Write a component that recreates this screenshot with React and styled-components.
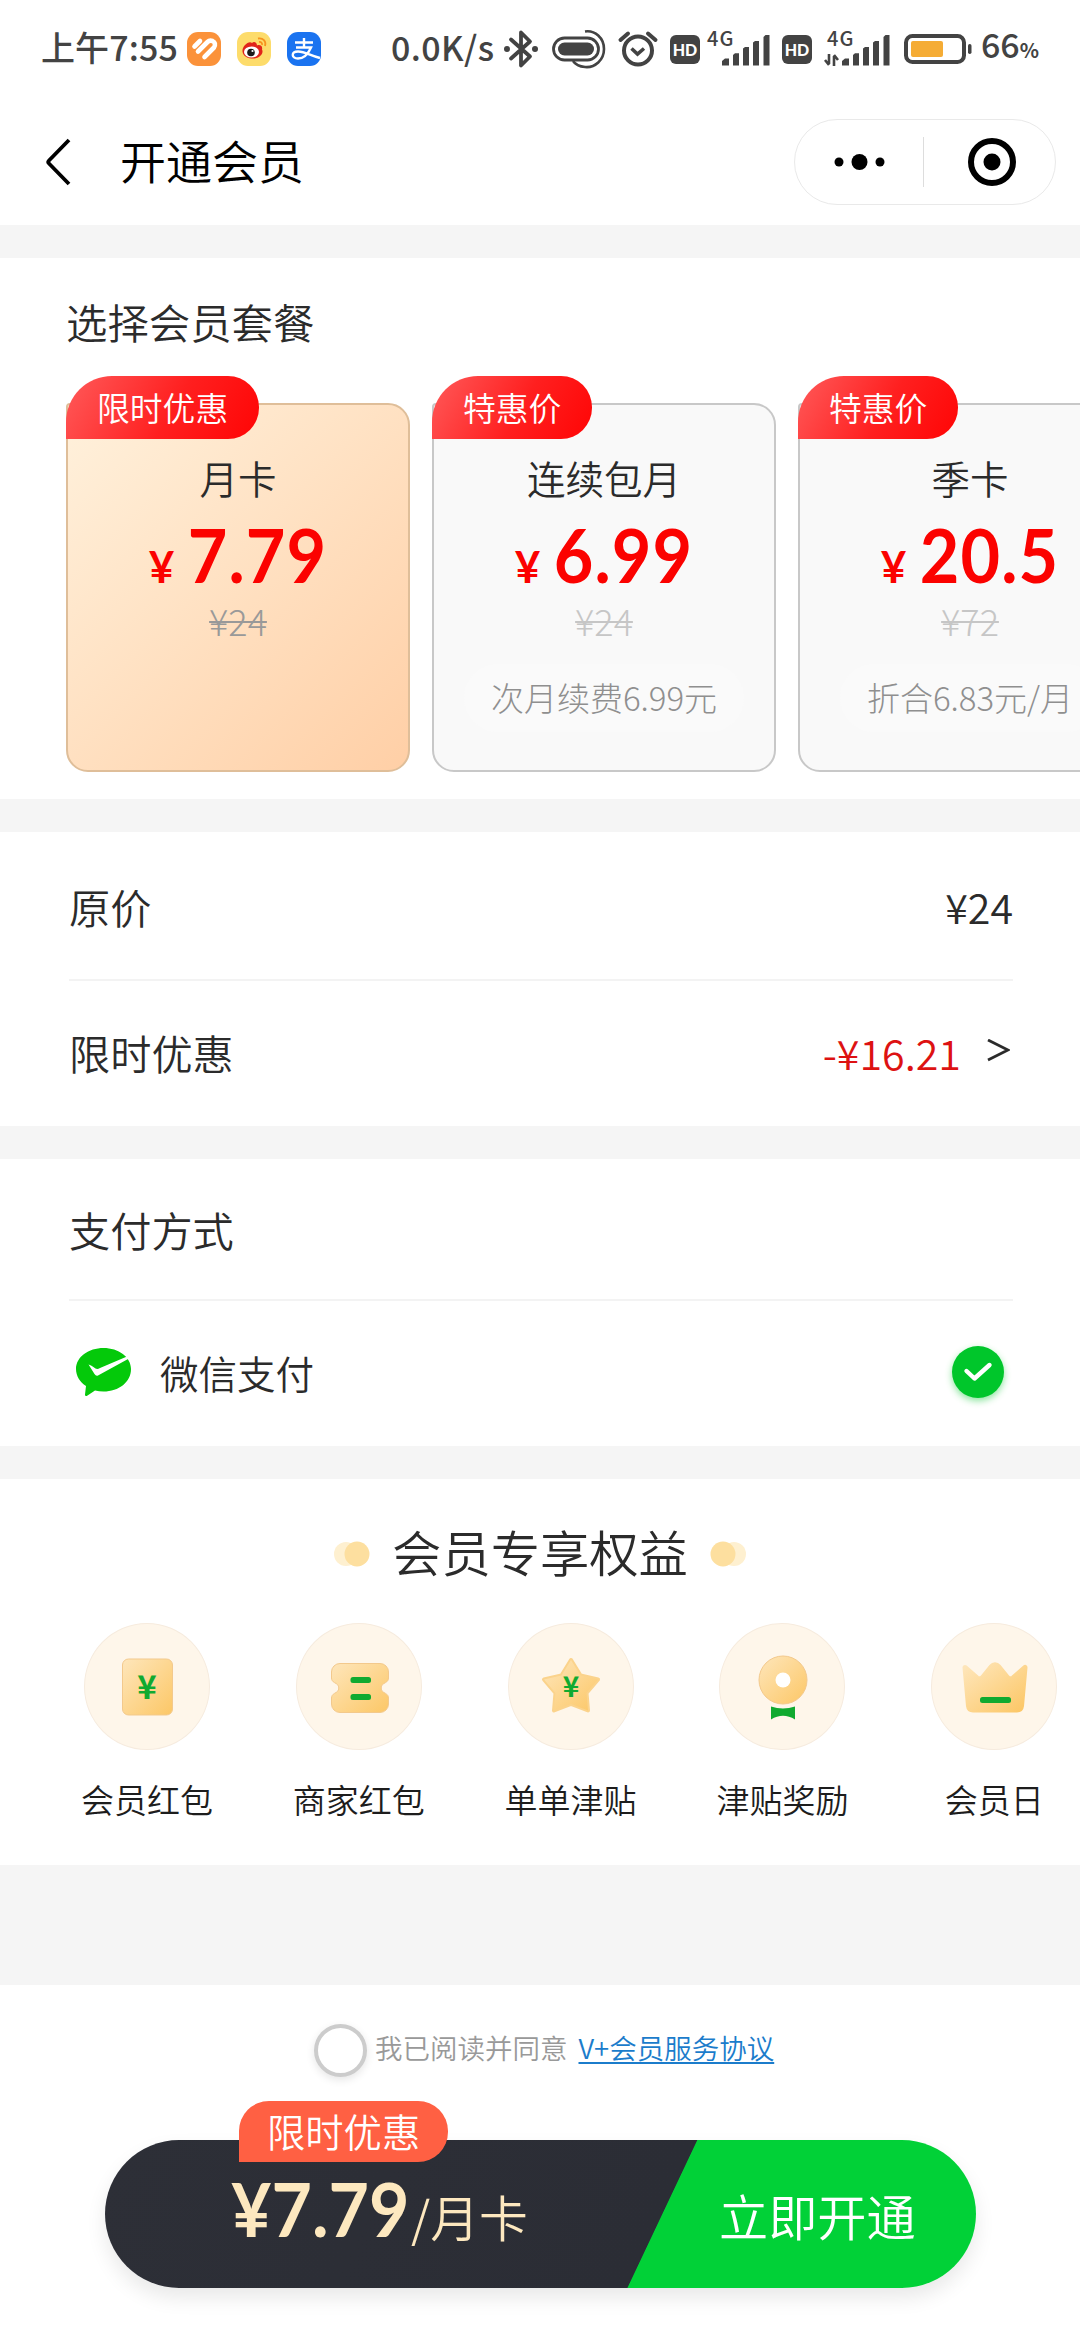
import React, { useState } from 'react';
import styled, { createGlobalStyle } from 'styled-components';

const GlobalStyle = createGlobalStyle`
  * {
    box-sizing: border-box;
  }
  body {
    margin: 0;
    background-color: #ffffff;
    font-family: 'Noto Sans CJK SC', sans-serif;
    color: #2b2b2b;
    overflow-x: hidden;
  }
  svg {
    display: block;
    flex-shrink: 0;
  }
`;

const PageWrapper = styled.div`
  width: 1080px;
  height: 2340px;
  display: flex;
  flex-direction: column;
  background-color: #f5f5f5;
  overflow: hidden;
`;

/* status bar */

const StatusBar = styled.div`
  height: 98px;
  flex-shrink: 0;
  display: flex;
  align-items: center;
  padding: 0 41px;
  background-color: #ffffff;
  color: #434343;
`;

const StatusText = styled.span`
  font-size: 34px;
  line-height: 94px;
  padding-bottom: 4px;
  font-weight: 500;
  white-space: nowrap;
  width: ${(props) => (props.$width ? `${props.$width}px` : 'auto')};
  margin-left: ${(props) => props.$gap || 0}px;
  letter-spacing: ${(props) => props.$spacing || 0}px;
`;

const AppIcons = styled.div`
  display: flex;
  gap: 16px;
  margin-left: 4px;
`;

const StatusRight = styled.div`
  display: flex;
  align-items: center;
  margin-left: auto;
`;

const StatusIcon = styled.svg`
  margin-left: ${(props) => props.$gap || 0}px;
  overflow: visible;
`;

const HdBadge = styled.div`
  width: 30px;
  height: 29px;
  margin-left: ${(props) => props.$gap}px;
  border-radius: 6px;
  background-color: #434343;
  color: #ffffff;
  font-family: Lato, sans-serif;
  font-weight: 900;
  font-size: 16px;
  line-height: 29px;
  text-align: center;
`;

const Percent = styled.span`
  font-size: 20px;
  font-weight: 700;
`;

/* nav bar */

const NavBar = styled.div`
  height: 127px;
  flex-shrink: 0;
  display: flex;
  align-items: center;
  padding: 0 24px 0 44px;
  background-color: #ffffff;
`;

const NavTitle = styled.h1`
  margin: 0 0 6px 48px;
  font-size: 46px;
  line-height: 60px;
  font-weight: 350;
  color: #000000;
`;

const Capsule = styled.div`
  width: 262px;
  height: 86px;
  margin-left: auto;
  display: flex;
  align-items: center;
  border: 1.5px solid #e9e9e9;
  border-radius: 43px;
`;

const CapsuleHalf = styled.div`
  flex: 1;
  display: flex;
  justify-content: center;
  padding-left: ${(props) => props.$pad || 0}px;
`;

const CapsuleLine = styled.div`
  width: 1px;
  height: 50px;
  background-color: #dddddd;
`;

/* sections */

const Section = styled.section`
  flex-shrink: 0;
  height: ${(props) => props.$height}px;
  margin-top: 33px;
  background-color: #ffffff;
`;

const SectionTitle = styled.h2`
  margin: 0;
  padding: 33px 0 0 66px;
  font-size: 41.4px;
  line-height: 60px;
  font-weight: 350;
`;

const PlanList = styled.div`
  display: flex;
  gap: 22px;
  padding: 52px 0 0 66px;
  overflow: hidden;
  height: 440px;
`;

const PlanCard = styled.div`
  position: relative;
  width: 344px;
  height: 369px;
  flex-shrink: 0;
  display: flex;
  flex-direction: column;
  align-items: center;
  padding-top: 44px;
  border: 2px solid ${(props) => (props.$active ? '#dfbe99' : '#c8c8c8')};
  border-radius: 4px 22px 22px 22px;
  background: ${(props) =>
    props.$active
      ? 'linear-gradient(135deg, #fff1dc 0%, #ffe2c4 45%, #ffcfa6 100%)'
      : '#f9f9f9'};
`;

const PlanBadge = styled.div`
  position: absolute;
  left: -2px;
  top: -29px;
  height: 63px;
  padding: 0 31px;
  border-radius: 46px 31px 31px 0;
  background: linear-gradient(120deg, #ff5a5a 0%, #ff1f1f 55%, #ff0505 100%);
  color: #ffffff;
  font-size: 32.8px;
  font-weight: 350;
  line-height: 62px;
  white-space: nowrap;
`;

const PlanName = styled.div`
  font-size: 38.5px;
  line-height: 56px;
  font-weight: 350;
`;

const PlanPrice = styled.div`
  display: flex;
  align-items: baseline;
  justify-content: center;
  height: 76px;
  margin-top: 11px;
  line-height: 76px;
  font-family: Lato, sans-serif;
  font-weight: 700;
  color: #fb0200;
`;

const Yen = styled.span`
  font-size: 44px;
  width: 24px;
  display: flex;
  justify-content: center;
`;

const Amount = styled.span`
  font-size: 75px;
  width: 139px;
  margin-left: 14px;
  display: flex;
  justify-content: center;
  letter-spacing: 1.2px;
  transform: scaleX(0.91);
`;

const OldPrice = styled.del`
  margin-top: 8px;
  font-size: 36px;
  line-height: 40px;
  font-weight: 300;
  color: ${(props) => (props.$active ? '#999999' : '#c6c6c6')};
  text-decoration-thickness: 2px;
`;

const PlanNote = styled.div`
  margin-top: 24px;
  height: 68px;
  padding: 0 27px;
  border-radius: 34px;
  background-color: #fafafa;
  font-size: 33px;
  font-weight: 300;
  line-height: 66px;
  color: #8f8f8f;
  white-space: nowrap;
`;

const Row = styled.div`
  height: ${(props) => props.$height}px;
  margin: 0 67px 0 69px;
  display: flex;
  align-items: center;
  font-size: 41.2px;
  font-weight: 350;
  border-bottom: ${(props) => (props.$divider ? '2px solid #f3f3f3' : 'none')};
`;

const RowValue = styled.span`
  margin-left: auto;
  color: ${(props) => props.$color || '#2b2b2b'};
`;

const RowArrow = styled.svg`
  margin: 0 3px 0 26px;
`;

const PayName = styled.span`
  margin-left: 28px;
  font-size: 38.5px;
`;

const PayCheck = styled.div`
  width: 52px;
  height: 52px;
  margin: 0 9px 0 auto;
  display: flex;
  align-items: center;
  justify-content: center;
  border-radius: 50%;
  background-color: #00c62b;
  box-shadow: 0 3px 7px rgba(0, 198, 43, 0.45);
`;

/* benefits */

const BenefitTitle = styled.h2`
  margin: 0;
  padding-top: 36px;
  display: flex;
  align-items: center;
  justify-content: center;
  gap: 22px;
  font-size: 49.3px;
  line-height: 72px;
  font-weight: 350;

  svg {
    margin-top: 6px;
  }
`;

const BenefitList = styled.div`
  display: flex;
  gap: 45.8px;
  padding: 36px 0 0 64px;
  overflow: hidden;
`;

const BenefitItem = styled.div`
  width: 166px;
  flex-shrink: 0;
  display: flex;
  flex-direction: column;
  align-items: center;
  font-size: 33px;
  line-height: 48px;
  font-weight: 350;
  color: #1d1d1d;
`;

const BenefitCircle = styled.div`
  width: 126px;
  height: 127px;
  margin-bottom: 25px;
  border: 1.5px solid #f6ebde;
  border-radius: 50%;
  background-color: #fef6ea;
  display: flex;
  align-items: center;
  justify-content: center;
`;

/* footer */

const Footer = styled.footer`
  flex: 1;
  margin-top: 120px;
  padding-top: 39px;
  background-color: #ffffff;
`;

const Agreement = styled.div`
  height: 53px;
  display: flex;
  align-items: center;
  padding-left: 314px;
  font-size: 27.5px;
  line-height: 47px;
  font-weight: 350;
  color: #999999;
`;

const AgreementText = styled.span`
  padding-bottom: 6px;
`;

const Radio = styled.button`
  width: 53px;
  height: 53px;
  padding: 0;
  margin-right: 8px;
  border: 4.5px solid #cccccc;
  border-radius: 50%;
  background-color: ${(props) => (props.$checked ? '#00c62b' : '#ffffff')};
  box-shadow: 0 3px 8px rgba(0, 0, 0, 0.1);
`;

const AgreementLink = styled.a`
  margin-left: 11px;
  color: #1b7ccb;
  text-decoration: underline;
  text-decoration-thickness: 2px;
  text-underline-offset: 3px;
`;

const SubmitBar = styled.div`
  position: relative;
  width: 871px;
  height: 148px;
  margin: 63px 0 0 105px;
  display: flex;
  border-radius: 74px;
  background: linear-gradient(115.3deg, #2d2f37 0%, #2b2d35 62.9%, #01d137 63%);
  box-shadow: 0 10px 20px rgba(0, 0, 0, 0.09);
`;

const SubmitBadge = styled.div`
  position: absolute;
  left: 134px;
  top: -39px;
  height: 61px;
  padding: 0 28px;
  border-radius: 30px 30px 30px 0;
  background-color: #ff6043;
  color: #ffffff;
  font-size: 38.3px;
  font-weight: 350;
  line-height: 60px;
  white-space: nowrap;
`;

const SubmitPrice = styled.div`
  width: 557px;
  height: 148px;
  padding-left: 126px;
  display: flex;
  align-items: baseline;
  line-height: 136px;
  color: #fde8bf;
`;

const SubmitAmount = styled.span`
  width: 180px;
  font-family: Lato, sans-serif;
  font-size: 75px;
  font-weight: 700;
  white-space: nowrap;
  transform: scaleX(0.93);
  transform-origin: left;
`;

const SubmitUnit = styled.span`
  font-size: 48.8px;
  font-weight: 350;
`;

const SubmitButton = styled.button`
  padding: 1px 0 0 57px;
  border: none;
  background: none;
  color: #ffffff;
  font-family: inherit;
  font-size: 49.2px;
  font-weight: 350;
`;

const plans = [
  { id: 'month', badge: '限时优惠', name: '月卡', price: '7.79', old: '¥24' },
  {
    id: 'auto',
    badge: '特惠价',
    name: '连续包月',
    price: '6.99',
    old: '¥24',
    note: '次月续费6.99元',
  },
  {
    id: 'season',
    badge: '特惠价',
    name: '季卡',
    price: '20.5',
    old: '¥72',
    note: '折合6.83元/月',
  },
];

const gold = 'url(#gold)';
const green = '#10aa30';

function GoldDefs() {
  return (
    <defs>
      <linearGradient id="gold" x1="0" y1="0" x2="1" y2="1">
        <stop offset="0" stopColor="#fee6bb" />
        <stop offset="1" stopColor="#fcc766" />
      </linearGradient>
    </defs>
  );
}

function IconYen({ y, size }) {
  return (
    <text
      x="63"
      y={y}
      textAnchor="middle"
      fontFamily="Noto Sans CJK SC, sans-serif"
      fontWeight="700"
      fontSize={size}
      fill={green}
    >
      ¥
    </text>
  );
}

const benefits = [
  {
    label: '会员红包',
    icon: (
      <>
        <rect x="38.5" y="35" width="50" height="56" rx="6" fill={gold} stroke="#f3c98c" />
        <IconYen y={75} size={33} />
      </>
    ),
  },
  {
    label: '商家红包',
    icon: (
      <>
        <path
          d="M44 39.5H84a8.5 8.5 0 0 1 8.5 8.5v6c0 2-1 3.5-3 4.6l-2.3 1.4c-2.6 1.8-2.6 6.2 0 8l2.3 1.4c2 1.1 3 2.6 3 4.6v6a8.5 8.5 0 0 1-8.5 8.5H44a8.5 8.5 0 0 1-8.5-8.5v-6c0-2 1-3.5 3-4.6l2.3-1.4c2.6-1.8 2.6-6.2 0-8l-2.3-1.4c-2-1.1-3-2.6-3-4.6v-6a8.5 8.5 0 0 1 8.500-8.500z"
          fill={gold}
          stroke="#f3c98c"
        />
        <rect x="54.5" y="53" width="20.5" height="6" rx="2.5" fill={green} />
        <rect x="54.5" y="70" width="20.5" height="6" rx="2.5" fill={green} />
      </>
    ),
  },
  {
    label: '单单津贴',
    icon: (
      <>
        <path
          d="M63 36L72.5 51.500L90 55.500L78.500 69L80 86.500L63 80L46 86.500L47.500 69L36 55.500L53.500 51.500Z"
          fill={gold}
          stroke="#fbd38c"
          strokeWidth="4"
          strokeLinejoin="round"
        />
        <path
          d="M63 36L72.5 51.500L90 55.500L78.500 69L80 86.500L63 80L46 86.500L47.500 69L36 55.500L53.500 51.500Z"
          fill={gold}
        />
        <IconYen y={73} size={28} />
      </>
    ),
  },
  {
    label: '津贴奖励',
    icon: (
      <>
        <circle cx="64" cy="56" r="24" fill={gold} stroke="#f3c98c" />
        <circle cx="64" cy="56" r="7.5" fill="#ffffff" />
        <path d="M52 82.500Q64 86.500 76 82.500V95.500Q64 88 52 95.500Z" fill={green} />
      </>
    ),
  },
  {
    label: '会员日',
    icon: (
      <>
        <path
          d="M34 43.5L46 54Q49 56 51.5 53.500L60 43Q64 38.500 68 43L76.500 53.500Q79 56 82 54L94 43.500L90.500 82Q90 86 86 86H42Q38 86 37.500 82Z"
          fill={gold}
          stroke={gold}
          strokeWidth="5"
          strokeLinejoin="round"
        />
        <rect x="49" y="73" width="31" height="6" rx="2.5" fill={green} />
      </>
    ),
  },
];

function SignalIcon({ gap, arrows }) {
  const shift = arrows ? 18 : 15;
  const width = arrows ? 66 : 63;
  return (
    <StatusIcon $gap={gap} width={width} height="38" viewBox={`0 0 ${width} 38`}>
      <text
        x={arrows ? 3 : 0}
        y="16"
        fontFamily="Noto Sans CJK SC, sans-serif"
        fontWeight="500"
        fontSize="20"
        letterSpacing="1"
        fill="#434343"
      >
        4G
      </text>
      {arrows && (
        <path
          d="M5 24V34M5 35L1 30M10 36V26M10 25L14 30"
          stroke="#434343"
          strokeWidth="2.6"
          fill="none"
        />
      )}
      <g fill="#434343">
        <path d={`M${shift} 35.5V31l3-2.5h4v7z`} />
        <path d={`M${shift + 11} 35.5V25l2-1.8h4v12.3z`} />
        <path d={`M${shift + 21} 35.5V18.5l2-1.5h4v18.5z`} />
        <path d={`M${shift + 31} 35.5V12.5l2-1.5h4v24.5z`} />
        <path d={`M${shift + 41.5} 35.5V7l2-2h4v30.5z`} />
      </g>
    </StatusIcon>
  );
}

function Status() {
  return (
    <StatusBar>
      <StatusText $width={142} $spacing={0.1}>上午7:55</StatusText>
      <AppIcons>
        <svg width="34" height="34" viewBox="0 0 34 34">
          <rect width="34" height="34" rx="11" fill="#fb923a" />
          <path
            d="M7.500 14.500L13 9M11 19.500L20.500 10M17.500 25L27 15.500Q29.500 11 25.500 9Q22.500 8 20.500 10"
            stroke="#ffffff"
            strokeWidth="4.6"
            strokeLinecap="round"
            fill="none"
          />
        </svg>
        <svg width="34" height="34" viewBox="0 0 34 34">
          <rect width="34" height="34" rx="11" fill="#fddc6b" />
          <path
            d="M15 11C12 8 5 14 5.500 19.500C6 25 13 27 17 26.500C23 26 27 21 25 17.500C26 13 22 12.500 20 13.500C20 10.500 17 9 15 11Z"
            fill="#e1251b"
          />
          <ellipse cx="14.5" cy="20" rx="7.5" ry="5.5" fill="#ffffff" />
          <circle cx="14" cy="20.5" r="3.8" fill="#1a1a1a" />
          <circle cx="15.5" cy="19" r="1.1" fill="#ffffff" />
          <path d="M21 6.500C26 5.500 29.500 9.500 28 14M22 10C24 9.700 25.500 11 25 13" stroke="#f7931e" strokeWidth="1.8" fill="none" />
        </svg>
        <svg width="34" height="34" viewBox="0 0 34 34">
          <rect width="34" height="34" rx="11" fill="#1a73f0" />
          <path
            d="M8 10.500H26M17 6V15.500M9 15.500H24C22 20 18 26.500 11 26.500C4 26.500 4 19.500 11 19.500C18 19.500 22 23 33 26"
            stroke="#ffffff"
            strokeWidth="2.4"
            fill="none"
          />
        </svg>
      </AppIcons>
      <StatusRight>
        <StatusText $width={107} $spacing={0.4}>0.0K/s</StatusText>
        <StatusIcon $gap={5} width="36" height="40" viewBox="0 0 36 40">
          <path
            d="M8 10.500L27 27.500L18 36.500V3.500L27 12.500L8 29.500"
            stroke="#434343"
            strokeWidth="3.8"
            strokeLinejoin="round"
            strokeLinecap="round"
            fill="none"
          />
          <circle cx="4" cy="20" r="3" fill="#434343" />
          <circle cx="32" cy="20" r="3" fill="#434343" />
        </StatusIcon>
        <StatusIcon $gap={13} width="54" height="40" viewBox="0 0 54 40">
          <path d="M33 2.500C43 1 52 9 52 20C52 31 43 39 33 38C27 37.500 23 35 21 32" stroke="#434343" strokeWidth="2.6" fill="none" />
          <rect x="1.5" y="9" width="45" height="22" rx="11" fill="#ffffff" stroke="#434343" strokeWidth="2.8" />
          <rect x="6" y="13.5" width="36" height="13" rx="6.5" fill="#434343" />
        </StatusIcon>
        <StatusIcon $gap={12} width="40" height="38" viewBox="0 0 40 38">
          <circle cx="20" cy="20.5" r="14" stroke="#434343" strokeWidth="4" fill="none" />
          <path d="M13.500 18.500L19.500 24L26 18.500" stroke="#434343" strokeWidth="3.6" fill="none" />
          <path d="M2.500 10L10 3.500M37.500 10L30 3.500" stroke="#434343" strokeWidth="4" strokeLinecap="round" />
        </StatusIcon>
        <HdBadge $gap={12}>HD</HdBadge>
        <SignalIcon gap={7} />
        <HdBadge $gap={12}>HD</HdBadge>
        <SignalIcon gap={12} arrows />
        <StatusIcon $gap={14} width="68" height="30" viewBox="0 0 68 30">
          <rect x="2" y="2" width="58" height="26" rx="6.5" stroke="#434343" strokeWidth="4" fill="none" />
          <rect x="7" y="7" width="32" height="16" rx="2" fill="#f5ac35" />
          <rect x="64" y="10" width="3.5" height="10" rx="1.7" fill="#434343" />
        </StatusIcon>
        <StatusText $gap={9}>
          66<Percent>%</Percent>
        </StatusText>
      </StatusRight>
    </StatusBar>
  );
}

function TitleDots({ flip }) {
  return (
    <svg width="37" height="26" viewBox="0 0 37 26">
      <circle cx={flip ? 24 : 13} cy="13" r="12" fill="#fef0d0" />
      <circle cx={flip ? 13 : 24} cy="13" r="12.5" fill="#fddf9f" />
    </svg>
  );
}

function App() {
  const [selected, setSelected] = useState('month');
  const [agreed, setAgreed] = useState(false);

  return (
    <PageWrapper>
      <GlobalStyle />
      <Status />
      <NavBar>
        <svg width="28" height="48" viewBox="0 0 28 48">
          <path d="M25 2L5 22.500Q3.500 24 5 25.500L25 46" stroke="#000000" strokeWidth="3.8" fill="none" />
        </svg>
        <NavTitle>开通会员</NavTitle>
        <Capsule>
          <CapsuleHalf $pad={2}>
            <svg width="52" height="18" viewBox="0 0 52 18">
              <circle cx="5" cy="9" r="4.5" />
              <circle cx="25.5" cy="9" r="8" />
              <circle cx="46" cy="9" r="4.5" />
            </svg>
          </CapsuleHalf>
          <CapsuleLine />
          <CapsuleHalf $pad={6}>
            <svg width="48" height="48" viewBox="0 0 48 48">
              <circle cx="24" cy="24" r="21" stroke="#000000" strokeWidth="6" fill="none" />
              <circle cx="24" cy="24" r="8.5" />
            </svg>
          </CapsuleHalf>
        </Capsule>
      </NavBar>

      <Section $height={541}>
        <SectionTitle>选择会员套餐</SectionTitle>
        <PlanList>
          {plans.map((plan) => (
            <PlanCard
              key={plan.id}
              $active={plan.id === selected}
              onClick={() => setSelected(plan.id)}
            >
              <PlanBadge>{plan.badge}</PlanBadge>
              <PlanName>{plan.name}</PlanName>
              <PlanPrice>
                <Yen>¥</Yen>
                <Amount>{plan.price}</Amount>
              </PlanPrice>
              <OldPrice $active={plan.id === selected}>{plan.old}</OldPrice>
              {plan.note && <PlanNote>{plan.note}</PlanNote>}
            </PlanCard>
          ))}
        </PlanList>
      </Section>

      <Section $height={294}>
        <Row $height={149} $divider>
          原价
          <RowValue>¥24</RowValue>
        </Row>
        <Row $height={142}>
          限时优惠
          <RowValue $color="#dd1212">-¥16.21</RowValue>
          <RowArrow width="23" height="26" viewBox="0 0 23 26">
            <path d="M1 1L21 11L1 21" stroke="#2b2b2b" strokeWidth="2.8" fill="none" />
          </RowArrow>
        </Row>
      </Section>

      <Section $height={287}>
        <Row $height={142} $divider>支付方式</Row>
        <Row $height={142}>
          <svg width="63" height="52" viewBox="0 0 63 52">
            <path
              d="M34.500 2C19.500 2 7 11 7 23C7 30 11 36 17 40L16 48.500Q16 51 18.500 49.500L26 44.500Q30 45.500 34.500 45.500C50 45.500 62 36 62 23C62 11 49.500 2 34.500 2Z"
              fill="#04c90a"
            />
            <path d="M19.500 18.500Q22 19 26.500 22.500Q28.500 23.500 31 22L58 10.500L60 12.500L29 29.500Q27 30.500 25.500 28Z" fill="#ffffff" />
          </svg>
          <PayName>微信支付</PayName>
          <PayCheck>
            <svg width="30" height="22" viewBox="0 0 30 22">
              <path d="M3.500 10L11.500 17.500L26.500 4" stroke="#ffffff" strokeWidth="4.4" strokeLinecap="round" strokeLinejoin="round" fill="none" />
            </svg>
          </PayCheck>
        </Row>
      </Section>

      <Section $height={386}>
        <BenefitTitle>
          <TitleDots />
          会员专享权益
          <TitleDots flip />
        </BenefitTitle>
        <BenefitList>
          {benefits.map((item) => (
            <BenefitItem key={item.label}>
              <BenefitCircle>
                <svg width="126" height="126" viewBox="0 0 126 126">
                  <GoldDefs />
                  {item.icon}
                </svg>
              </BenefitCircle>
              {item.label}
            </BenefitItem>
          ))}
        </BenefitList>
      </Section>

      <Footer>
        <Agreement>
          <Radio $checked={agreed} onClick={() => setAgreed(!agreed)} />
          <AgreementText>
            我已阅读并同意
            <AgreementLink>V+会员服务协议</AgreementLink>
          </AgreementText>
        </Agreement>
        <SubmitBar>
          <SubmitPrice>
            <SubmitAmount>¥7.79</SubmitAmount>
            <SubmitUnit>/月卡</SubmitUnit>
          </SubmitPrice>
          <SubmitButton>立即开通</SubmitButton>
          <SubmitBadge>限时优惠</SubmitBadge>
        </SubmitBar>
      </Footer>
    </PageWrapper>
  );
}

export default App;
